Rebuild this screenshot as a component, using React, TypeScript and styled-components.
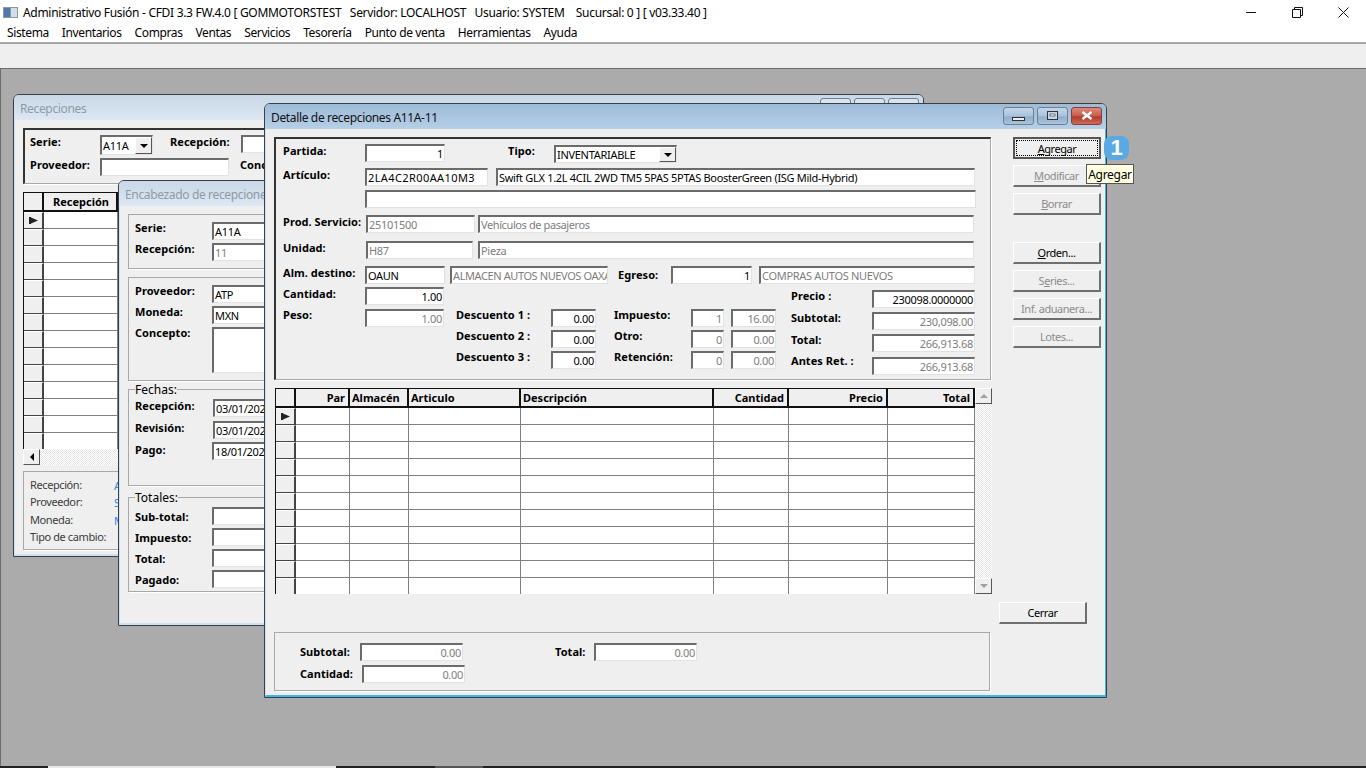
import React from "react";
import styled, { createGlobalStyle } from "styled-components";

const GlobalStyle = createGlobalStyle`
    html, body {
        margin: 0;
        padding: 0;
        height: 100%;
        overflow: hidden;
        background: #ababab;
    }
    #root {
        height: 100%;
    }
    * {
        box-sizing: border-box;
    }
`;

const UI_FONT = `"Noto Sans", "Open Sans", "Liberation Sans", sans-serif`;

const App_ = styled.div`
    display: flex;
    flex-direction: column;
    height: 768px;
    font-family: ${UI_FONT};
    font-size: 11px;
    color: #000;
`;

const TitleBar = styled.div`
    display: flex;
    align-items: center;
    height: 24px;
    background: #fff;
    padding-left: 3px;
    font-size: 12px;
    letter-spacing: -0.3px;
    white-space: pre;
`;

const TitleText = styled.span`
    margin-left: 5px;
    flex: 1;
`;

const SysButton = styled.div`
    width: 46px;
    height: 24px;
    display: flex;
    align-items: center;
    justify-content: center;
`;

const MenuBar = styled.div`
    display: flex;
    gap: 13px;
    height: 18px;
    padding: 0 0 2px 7px;
    align-items: center;
    background: #fff;
    font-size: 12px;
    letter-spacing: -0.38px;
`;

const ToolBar = styled.div`
    height: 25px;
    margin-top: 1px;
    background: #efefef;
    border-top: 1px solid #a0a0a0;
`;

const Mdi = styled.div`
    position: relative;
    flex: 1;
    background: #ababab;
    border-top: 1px solid #6c6c6c;
    border-left: 1px solid #6c6c6c;
    overflow: hidden;
`;

const TaskStrip = styled.div`
    display: flex;
    height: 2px;
    background: #222;
`;

const TaskPiece = styled.div<{ $w: number; $c: string }>`
    width: ${(p) => p.$w}px;
    background: ${(p) => p.$c};
`;

const Win = styled.section<{ $x: number; $y: number; $w: number; $h: number }>`
    position: absolute;
    left: ${(p) => p.$x}px;
    top: ${(p) => p.$y}px;
    width: ${(p) => p.$w}px;
    height: ${(p) => p.$h}px;
    display: flex;
    flex-direction: column;
    background: #efefef;
    border: 1px solid #3a3f44;
    border-radius: 6px 6px 0 0;
`;

const WinTitle = styled.header<{ $active?: boolean }>`
    display: flex;
    align-items: center;
    flex: none;
    height: 25px;
    padding: 2px 4px 0 6px;
    border-radius: 5px 5px 0 0;
    font-size: 12px;
    letter-spacing: -0.35px;
    color: ${(p) => (p.$active ? "#111" : "#8e9aa6")};
    background: ${(p) =>
        p.$active
            ? "linear-gradient(#9dbbd8, #b6cfe7)"
            : "linear-gradient(#c9d8e7, #dce7f2)"};
`;

const WinCaption = styled.span`
    flex: 1;
    white-space: nowrap;
`;

const CaptionButton = styled.div<{ $close?: boolean; $active?: boolean }>`
    width: 31px;
    height: 18px;
    margin-left: 3px;
    margin-top: -4px;
    display: flex;
    align-items: center;
    justify-content: center;
    border: 1px solid ${(p) => (p.$close ? "#8a3d35" : "#6e7f92")};
    border-radius: 3px;
    background: ${(p) =>
        p.$close
            ? "linear-gradient(#dc8a7e, #c75a4b 50%, #b23a2b 55%, #c96a5c)"
            : p.$active
              ? "linear-gradient(#c3d6e9, #a9c3dc 50%, #8fadca 55%, #a8c4de)"
              : "linear-gradient(#dbe5ef, #ccdae8)"};
`;

const WinBody = styled.div<{ $active?: boolean }>`
    flex: 1;
    min-height: 0;
    overflow: hidden;
    padding: 8px 0 0 8px;
    border-left: 1px solid #cfe2f3;
    border-right: 1px solid ${(p) => (p.$active ? "#3fb7e6" : "#cfe2f3")};
    border-bottom: 2px solid ${(p) => (p.$active ? "#3fb7e6" : "#cfe2f3")};
    position: relative;
`;

const TopArea = styled.div`
    display: flex;
    align-items: flex-start;
`;

const Panel = styled.div<{ $w: number; $h: number; $dark?: boolean; $pt?: number; $pl?: number; $mt?: number }>`
    flex: none;
    width: ${(p) => p.$w}px;
    height: ${(p) => p.$h}px;
    margin-top: ${(p) => p.$mt ?? 0}px;
    padding: ${(p) => p.$pt ?? 5}px 0 0 ${(p) => p.$pl ?? 7}px;
    border: 1px solid #a8a8a8;
    ${(p) => p.$dark && "border-top: 2px solid #333; border-left: 2px solid #333;"}
    box-shadow: 1px 1px 0 #fff;
    overflow: hidden;
`;

const Row = styled.div<{ $h: number; $ml?: number }>`
    display: flex;
    align-items: flex-start;
    height: ${(p) => p.$h}px;
    margin-left: ${(p) => p.$ml ?? 0}px;
`;

const Label = styled.span<{ $w?: number; $ml?: number; $mt?: number; $plain?: boolean }>`
    flex: none;
    width: ${(p) => (p.$w ? `${p.$w}px` : "auto")};
    margin-left: ${(p) => p.$ml ?? 0}px;
    margin-top: ${(p) => p.$mt ?? 0}px;
    line-height: 14px;
    font-weight: ${(p) => (p.$plain ? 400 : 700)};
    letter-spacing: ${(p) => (p.$plain ? "-0.4px" : "0.05px")};
    color: ${(p) => (p.$plain ? "#3c3c3c" : "#000")};
    white-space: nowrap;
`;

const Field = styled.div<{
    $w: number;
    $h?: number;
    $ml?: number;
    $mt?: number;
    $right?: boolean;
    $muted?: boolean;
    $ls?: number;
}>`
    flex: none;
    display: flex;
    align-items: center;
    justify-content: ${(p) => (p.$right ? "flex-end" : "flex-start")};
    width: ${(p) => p.$w}px;
    height: ${(p) => p.$h ?? 18}px;
    margin-left: ${(p) => p.$ml ?? 0}px;
    margin-top: ${(p) => p.$mt ?? 0}px;
    padding: 0 1px 1px;
    background: #fff;
    border: 1px solid #e2e2e2;
    border-top: 2px solid #6b6b6b;
    border-left: 2px solid #6b6b6b;
    color: ${(p) => (p.$muted ? "#7d7d7d" : "#000")};
    letter-spacing: ${(p) => p.$ls ?? -0.3}px;
    white-space: nowrap;
    overflow: hidden;
`;

const Combo = styled(Field)`
    position: relative;
`;

const DropButton = styled.div`
    position: absolute;
    right: 0;
    top: 0;
    bottom: 0;
    width: 17px;
    display: flex;
    align-items: center;
    justify-content: center;
    background: #efefef;
    border-left: 1px solid #fff;
    border-top: 1px solid #fff;
    border-right: 1px solid #555;
    border-bottom: 1px solid #555;

    &::after {
        content: "";
        border-left: 4px solid transparent;
        border-right: 4px solid transparent;
        border-top: 4px solid #000;
    }
`;

const LowerRows = styled.div`
    display: flex;
    align-items: flex-start;
`;

const Column = styled.div<{ $w: number; $pt?: number }>`
    flex: none;
    width: ${(p) => p.$w}px;
    padding-top: ${(p) => p.$pt ?? 0}px;
`;

const ButtonColumn = styled.div`
    flex: none;
    display: flex;
    flex-direction: column;
    margin-left: 22px;
`;

const WinButton = styled.div<{ $off?: boolean; $focus?: boolean; $mt?: number; $w?: number }>`
    position: relative;
    width: ${(p) => p.$w ?? 88}px;
    height: 22px;
    margin-top: ${(p) => p.$mt ?? 6}px;
    display: flex;
    align-items: center;
    justify-content: center;
    background: #efefef;
    border-top: 1px solid #fff;
    border-left: 1px solid #fff;
    border-right: 2px solid #6f6f6f;
    border-bottom: 2px solid #6f6f6f;
    letter-spacing: -0.45px;
    color: ${(p) => (p.$off ? "#8c8c8c" : "#000")};
    ${(p) =>
        p.$focus &&
        `
        border: 2px solid #555;
        &::before {
            content: "";
            position: absolute;
            inset: 1px;
            border: 1px dotted #000;
        }
    `}
`;

const GridWrap = styled.div<{ $mt?: number }>`
    display: flex;
    margin-top: ${(p) => p.$mt ?? 8}px;
`;

const Grid = styled.div<{ $w: number; $h: number; $cols: string; $ml?: number }>`
    display: grid;
    grid-template-columns: ${(p) => p.$cols};
    grid-template-rows: 19px;
    grid-auto-rows: 17px;
    width: ${(p) => p.$w}px;
    height: ${(p) => p.$h}px;
    margin-left: ${(p) => p.$ml ?? 0}px;
    overflow: hidden;
    background: #fff;
    border-top: 1px solid #111;
    border-left: 1px solid #111;
    flex: none;
`;

const HeadCell = styled.div<{ $right?: boolean; $pl?: number }>`
    display: flex;
    align-items: center;
    justify-content: ${(p) => (p.$right ? "flex-end" : "flex-start")};
    padding: 0 3px 1px ${(p) => p.$pl ?? 2}px;
    background: #efefef;
    border-right: 2px solid #111;
    border-bottom: 2px solid #111;
    font-weight: 700;
    white-space: nowrap;
`;

const IndicatorCell = styled.div`
    display: flex;
    align-items: center;
    justify-content: center;
    background: #efefef;
    border-top: 1px solid #fff;
    border-right: 2px solid #444;
    border-bottom: 1px solid #444;
`;

const DataCell = styled.div`
    background: #fff;
    border-right: 1px solid #808080;
    border-bottom: 1px solid #808080;
`;

const VScroll = styled.div`
    flex: none;
    width: 17px;
    height: 206px;
    display: flex;
    flex-direction: column;
    justify-content: space-between;
    background: repeating-conic-gradient(#fff 0 25%, #e6e6e6 0 50%) 0 0 / 2px 2px;
`;

const HScroll = styled.div`
    display: flex;
    width: 95px;
    height: 16px;
    background: repeating-conic-gradient(#fff 0 25%, #e6e6e6 0 50%) 0 0 / 2px 2px;
`;

const ScrollButton = styled.div`
    width: 17px;
    height: 16px;
    display: flex;
    align-items: center;
    justify-content: center;
    background: #efefef;
    border-top: 1px solid #fff;
    border-left: 1px solid #fff;
    border-right: 1px solid #555;
    border-bottom: 1px solid #555;
`;

const ArrowUp = styled.i<{ $c: string }>`
    border-left: 4px solid transparent;
    border-right: 4px solid transparent;
    border-bottom: 4px solid ${(p) => p.$c};
`;

const ArrowDown = styled.i<{ $c: string }>`
    border-left: 4px solid transparent;
    border-right: 4px solid transparent;
    border-top: 4px solid ${(p) => p.$c};
`;

const ArrowLeft = styled.i`
    border-top: 4px solid transparent;
    border-bottom: 4px solid transparent;
    border-right: 4px solid #000;
`;

const CloseRow = styled.div`
    display: flex;
    justify-content: flex-end;
    padding-right: 18px;
    margin-top: 8px;
`;

const BlueValue = styled.span`
    color: #2f86de;
    white-space: nowrap;
`;

const Group = styled.fieldset<{ $h: number; $mt: number }>`
    width: 480px;
    height: ${(p) => p.$h}px;
    margin: ${(p) => p.$mt}px 0 0 0;
    padding: 4px 0 0 6px;
    border: 1px solid #a8a8a8;
    box-shadow: 1px 1px 0 #fff;
`;

const GroupTitle = styled.legend`
    padding: 0;
    font-size: 12px;
    line-height: 12px;
`;

const GroupText = styled.span`
    position: relative;
    top: 1px;
`;

const Badge = styled.div`
    position: absolute;
    left: 1103px;
    top: 67px;
    width: 25px;
    height: 24px;
    display: flex;
    align-items: center;
    justify-content: center;
    border-radius: 8px;
    background: #5ba9e2;
    color: #fff;
    font-size: 22px;
    font-weight: 700;
    font-family: "Liberation Sans", sans-serif;
`;

const Tooltip = styled.div`
    position: absolute;
    left: 1085px;
    top: 95px;
    width: 48px;
    height: 20px;
    display: flex;
    align-items: center;
    justify-content: center;
    background: #ffffe1;
    border: 1px solid #555;
    font-size: 12px;
    letter-spacing: -0.3px;
    white-space: nowrap;
`;

function RowMarker() {
    return (
        <svg width="9" height="7" viewBox="0 0 9 7">
            <rect x="0" y="0" width="2" height="7" fill="#222" />
            <path d="M2 0.5 L9 3.5 L2 6.5 Z" fill="#222" />
        </svg>
    );
}

function AppIcon() {
    return (
        <svg width="15" height="13" viewBox="0 0 15 13">
            <rect x="0" y="1" width="15" height="11" fill="#8a97a5" />
            <rect x="1" y="2" width="6" height="9" fill="#4f78a8" />
            <rect x="8" y="2" width="6" height="9" fill="#d5dee7" />
        </svg>
    );
}

function GridBody({ columns, rows }: { columns: number; rows: number }) {
    const cells = [];
    for (let r = 0; r < rows; r++) {
        cells.push(
            <IndicatorCell key={`i${r}`}>{r === 0 ? <RowMarker /> : null}</IndicatorCell>,
        );
        for (let c = 0; c < columns; c++) {
            cells.push(<DataCell key={`${r}-${c}`} />);
        }
    }
    return <>{cells}</>;
}

function RecepcionesWindow() {
    return (
        <Win $x={12} $y={25} $w={911} $h={463}>
            <WinTitle>
                <WinCaption>Recepciones</WinCaption>
                <CaptionButton />
                <CaptionButton />
                <CaptionButton />
            </WinTitle>
            <WinBody>
                <Panel $w={880} $h={56} $dark $pt={5} $pl={5}>
                    <Row $h={23}>
                        <Label $w={70}>Serie:</Label>
                        <Combo $w={53} $h={20}>
                            A11A
                            <DropButton />
                        </Combo>
                        <Label $w={71} $ml={17}>
                            Recepción:
                        </Label>
                        <Field $w={90} />
                    </Row>
                    <Row $h={20}>
                        <Label $w={70}>Proveedor:</Label>
                        <Field $w={129} />
                        <Label $ml={11}>Concepto:</Label>
                    </Row>
                </Panel>
                <GridWrap>
                    <Grid $w={300} $h={257} $cols="20px 74px 1fr">
                        <HeadCell />
                        <HeadCell $pl={9}>Recepción</HeadCell>
                        <HeadCell />
                        <GridBody columns={2} rows={14} />
                    </Grid>
                </GridWrap>
                <HScroll>
                    <ScrollButton>
                        <ArrowLeft />
                    </ScrollButton>
                </HScroll>
                <Panel $w={880} $h={79} $mt={6} $pt={6} $pl={6}>
                    <Row $h={17}>
                        <Label $plain $w={84}>
                            Recepción:
                        </Label>
                        <BlueValue>A11A</BlueValue>
                    </Row>
                    <Row $h={18}>
                        <Label $plain $w={84}>
                            Proveedor:
                        </Label>
                        <BlueValue>SUZUKI</BlueValue>
                    </Row>
                    <Row $h={17}>
                        <Label $plain $w={84}>
                            Moneda:
                        </Label>
                        <BlueValue>MXN</BlueValue>
                    </Row>
                    <Row $h={17}>
                        <Label $plain $w={84}>
                            Tipo de cambio:
                        </Label>
                    </Row>
                </Panel>
            </WinBody>
        </Win>
    );
}

function EncabezadoWindow() {
    return (
        <Win $x={117} $y={111} $w={600} $h={446}>
            <WinTitle>
                <WinCaption>Encabezado de recepciones</WinCaption>
            </WinTitle>
            <WinBody>
                <Panel $w={480} $h={55} $pl={6} $pt={7}>
                    <Row $h={21}>
                        <Label $w={77} $mt={-1}>
                            Serie:
                        </Label>
                        <Field $w={100}>A11A</Field>
                    </Row>
                    <Row $h={18}>
                        <Label $w={77} $mt={-1}>
                            Recepción:
                        </Label>
                        <Field $w={100} $muted>
                            11
                        </Field>
                    </Row>
                </Panel>
                <Panel $w={480} $h={104} $mt={8} $pl={6} $pt={7}>
                    <Row $h={21}>
                        <Label $w={77} $mt={-1}>
                            Proveedor:
                        </Label>
                        <Field $w={100}>ATP</Field>
                    </Row>
                    <Row $h={21}>
                        <Label $w={77} $mt={-1}>
                            Moneda:
                        </Label>
                        <Field $w={100}>MXN</Field>
                    </Row>
                    <Row $h={46}>
                        <Label $w={77} $mt={-1}>
                            Concepto:
                        </Label>
                        <Field $w={100} $h={46} />
                    </Row>
                </Panel>
                <Group $h={103} $mt={2}>
                    <GroupTitle>
                        <GroupText>Fechas:</GroupText>
                    </GroupTitle>
                    <Row $h={22}>
                        <Label $w={78}>Recepción:</Label>
                        <Field $w={100}>03/01/2022</Field>
                    </Row>
                    <Row $h={21}>
                        <Label $w={78}>Revisión:</Label>
                        <Field $w={100}>03/01/2022</Field>
                    </Row>
                    <Row $h={22}>
                        <Label $w={77} $mt={1}>
                            Pago:
                        </Label>
                        <Field $w={100}>18/01/2022</Field>
                    </Row>
                </Group>
                <Group $h={101} $mt={5}>
                    <GroupTitle>
                        <GroupText>Totales:</GroupText>
                    </GroupTitle>
                    <Row $h={21}>
                        <Label $w={77} $mt={3}>
                            Sub-total:
                        </Label>
                        <Field $w={100} />
                    </Row>
                    <Row $h={21}>
                        <Label $w={77} $mt={3}>
                            Impuesto:
                        </Label>
                        <Field $w={100} />
                    </Row>
                    <Row $h={21}>
                        <Label $w={77} $mt={3}>
                            Total:
                        </Label>
                        <Field $w={100} />
                    </Row>
                    <Row $h={21}>
                        <Label $w={77} $mt={3}>
                            Pagado:
                        </Label>
                        <Field $w={100} />
                    </Row>
                </Group>
            </WinBody>
        </Win>
    );
}

function DetalleWindow() {
    const cols = "20px 54px 59px 112px 193px 75px 99px 87px";
    return (
        <Win $x={263} $y={34} $w={843} $h={595}>
            <WinTitle $active>
                <WinCaption>Detalle de recepciones A11A-11</WinCaption>
                <CaptionButton $active>
                    <svg width="13" height="12" viewBox="0 0 13 12">
                        <rect x="0.5" y="7.5" width="12" height="3" fill="#e8eef5" stroke="#333" />
                    </svg>
                </CaptionButton>
                <CaptionButton $active>
                    <svg width="11" height="9" viewBox="0 0 11 9">
                        <rect x="0.5" y="0.5" width="10" height="8" fill="#c6d6e6" stroke="#333" />
                        <rect x="3" y="3" width="5" height="2" fill="#eef3f8" stroke="#333" strokeWidth="0.6" />
                    </svg>
                </CaptionButton>
                <CaptionButton $close>
                    <svg width="12" height="9" viewBox="0 0 12 9">
                        <path d="M1.5 1 L10.5 8 M10.5 1 L1.5 8" stroke="#fff" strokeWidth="2.4" />
                    </svg>
                </CaptionButton>
            </WinTitle>
            <WinBody $active>
                <TopArea>
                    <Panel $w={717} $h={243} $dark>
                        <Row $h={24}>
                            <Label $w={82}>Partida:</Label>
                            <Field $w={80} $right>
                                1
                            </Field>
                            <Label $w={46} $ml={63}>
                                Tipo:
                            </Label>
                            <Combo $w={123} $mt={1}>
                                INVENTARIABLE
                                <DropButton />
                            </Combo>
                        </Row>
                        <Row $h={22}>
                            <Label $w={82}>Artículo:</Label>
                            <Field $w={123} $ls={0.4}>
                                2LA4C2R00AA10M3
                            </Field>
                            <Field $w={479} $ml={8}>
                                Swift GLX 1.2L 4CIL 2WD TM5 5PAS 5PTAS BoosterGreen (ISG Mild-Hybrid)
                            </Field>
                        </Row>
                        <Row $h={25}>
                            <Label $w={82} />
                            <Field $w={611} />
                        </Row>
                        <Row $h={26}>
                            <Label $w={83}>Prod. Servicio:</Label>
                            <Field $w={109} $muted>
                                25101500
                            </Field>
                            <Field $w={496} $ml={3} $muted $ls={-0.4}>
                                Vehículos de pasajeros
                            </Field>
                        </Row>
                        <Row $h={25}>
                            <Label $w={83}>Unidad:</Label>
                            <Field $w={107} $muted>
                                H87
                            </Field>
                            <Field $w={496} $ml={5} $muted>
                                Pieza
                            </Field>
                        </Row>
                        <Row $h={21}>
                            <Label $w={82}>Alm. destino:</Label>
                            <Field $w={80}>OAUN</Field>
                            <Field $w={158} $ml={5} $muted $ls={-0.4}>
                                ALMACEN AUTOS NUEVOS OAXACA
                            </Field>
                            <Label $w={53} $ml={10} $mt={2}>
                                Egreso:
                            </Label>
                            <Field $w={81} $right>
                                1
                            </Field>
                            <Field $w={216} $ml={7} $muted>
                                COMPRAS AUTOS NUEVOS
                            </Field>
                        </Row>
                        <LowerRows>
                            <Column $w={173}>
                                <Row $h={22}>
                                    <Label $w={82}>Cantidad:</Label>
                                    <Field $w={79} $right>
                                        1.00
                                    </Field>
                                </Row>
                                <Row $h={22}>
                                    <Label $w={82} $mt={-1}>
                                        Peso:
                                    </Label>
                                    <Field $w={79} $right $muted>
                                        1.00
                                    </Field>
                                </Row>
                            </Column>
                            <Column $w={158} $pt={22}>
                                <Row $h={21}>
                                    <Label $w={95} $mt={-1}>
                                        Descuento 1 :
                                    </Label>
                                    <Field $w={45} $right>
                                        0.00
                                    </Field>
                                </Row>
                                <Row $h={21}>
                                    <Label $w={95} $mt={-1}>
                                        Descuento 2 :
                                    </Label>
                                    <Field $w={45} $right>
                                        0.00
                                    </Field>
                                </Row>
                                <Row $h={21}>
                                    <Label $w={95} $mt={-1}>
                                        Descuento 3 :
                                    </Label>
                                    <Field $w={45} $right>
                                        0.00
                                    </Field>
                                </Row>
                            </Column>
                            <Column $w={177} $pt={22}>
                                <Row $h={21}>
                                    <Label $w={77} $mt={-1}>
                                        Impuesto:
                                    </Label>
                                    <Field $w={33} $right $muted>
                                        1
                                    </Field>
                                    <Field $w={45} $ml={7} $right $muted>
                                        16.00
                                    </Field>
                                </Row>
                                <Row $h={21}>
                                    <Label $w={77} $mt={-1}>
                                        Otro:
                                    </Label>
                                    <Field $w={33} $right $muted>
                                        0
                                    </Field>
                                    <Field $w={45} $ml={7} $right $muted>
                                        0.00
                                    </Field>
                                </Row>
                                <Row $h={21}>
                                    <Label $w={77} $mt={-1}>
                                        Retención:
                                    </Label>
                                    <Field $w={33} $right $muted>
                                        0
                                    </Field>
                                    <Field $w={45} $ml={7} $right $muted>
                                        0.00
                                    </Field>
                                </Row>
                            </Column>
                            <Column $w={190} $pt={3}>
                                <Row $h={22}>
                                    <Label $w={81} $mt={-1}>
                                        Precio :
                                    </Label>
                                    <Field $w={103} $right>
                                        230098.0000000
                                    </Field>
                                </Row>
                                <Row $h={22}>
                                    <Label $w={81} $mt={-1}>
                                        Subtotal:
                                    </Label>
                                    <Field $w={103} $right $muted>
                                        230,098.00
                                    </Field>
                                </Row>
                                <Row $h={23}>
                                    <Label $w={81} $mt={-1}>
                                        Total:
                                    </Label>
                                    <Field $w={103} $right $muted>
                                        266,913.68
                                    </Field>
                                </Row>
                                <Row $h={22}>
                                    <Label $w={81} $mt={-3}>
                                        Antes Ret. :
                                    </Label>
                                    <Field $w={103} $right $muted>
                                        266,913.68
                                    </Field>
                                </Row>
                            </Column>
                        </LowerRows>
                    </Panel>
                    <ButtonColumn>
                        <WinButton $focus $mt={0}>
                            <span>
                                <u>A</u>gregar
                            </span>
                        </WinButton>
                        <WinButton $off>
                            <span>
                                <u>M</u>odificar
                            </span>
                        </WinButton>
                        <WinButton $off>
                            <span>
                                <u>B</u>orrar
                            </span>
                        </WinButton>
                        <WinButton $mt={27}>
                            <span>
                                <u>O</u>rden...
                            </span>
                        </WinButton>
                        <WinButton $off>
                            <span>
                                S<u>e</u>ries...
                            </span>
                        </WinButton>
                        <WinButton $off>Inf. aduanera...</WinButton>
                        <WinButton $off>Lotes...</WinButton>
                    </ButtonColumn>
                </TopArea>
                <GridWrap>
                    <Grid $w={700} $h={206} $cols={cols} $ml={1}>
                        <HeadCell />
                        <HeadCell $right>Par</HeadCell>
                        <HeadCell>Almacén</HeadCell>
                        <HeadCell>Articulo</HeadCell>
                        <HeadCell>Descripción</HeadCell>
                        <HeadCell $right>Cantidad</HeadCell>
                        <HeadCell $right>Precio</HeadCell>
                        <HeadCell $right>Total</HeadCell>
                        <GridBody columns={7} rows={11} />
                    </Grid>
                    <VScroll>
                        <ScrollButton>
                            <ArrowUp $c="#a0a0a0" />
                        </ScrollButton>
                        <ScrollButton>
                            <ArrowDown $c="#a0a0a0" />
                        </ScrollButton>
                    </VScroll>
                </GridWrap>
                <CloseRow>
                    <WinButton $mt={0}>Cerrar</WinButton>
                </CloseRow>
                <Panel $w={716} $h={59} $mt={8} $pt={10} $pl={25}>
                    <Row $h={22}>
                        <Label $w={60} $mt={2}>
                            Subtotal:
                        </Label>
                        <Field $w={103} $right $muted>
                            0.00
                        </Field>
                        <Label $w={39} $ml={92} $mt={2}>
                            Total:
                        </Label>
                        <Field $w={103} $right $muted>
                            0.00
                        </Field>
                    </Row>
                    <Row $h={18}>
                        <Label $w={62} $mt={2}>
                            Cantidad:
                        </Label>
                        <Field $w={103} $right $muted>
                            0.00
                        </Field>
                    </Row>
                </Panel>
            </WinBody>
        </Win>
    );
}

export default function App() {
    return (
        <App_>
            <GlobalStyle />
            <TitleBar>
                <AppIcon />
                <TitleText>
                    {"Administrativo Fusión - CFDI 3.3 FW.4.0 [ GOMMOTORSTEST   Servidor: LOCALHOST   Usuario: SYSTEM    Sucursal: 0 ] [ v03.33.40 ]"}
                </TitleText>
                <SysButton>
                    <svg width="11" height="10" viewBox="0 0 11 10">
                        <path d="M0 5.5 H10" stroke="#111" />
                    </svg>
                </SysButton>
                <SysButton>
                    <svg width="11" height="11" viewBox="0 0 11 11">
                        <path d="M0.5 2.5 H8.5 V10.5 H0.5 Z M2.5 2.5 V0.5 H10.5 V8.5 H8.5" fill="none" stroke="#111" />
                    </svg>
                </SysButton>
                <SysButton>
                    <svg width="11" height="11" viewBox="0 0 11 11">
                        <path d="M0.5 0.5 L10.5 10.5 M10.5 0.5 L0.5 10.5" stroke="#111" />
                    </svg>
                </SysButton>
            </TitleBar>
            <MenuBar>
                <span>Sistema</span>
                <span>Inventarios</span>
                <span>Compras</span>
                <span>Ventas</span>
                <span>Servicios</span>
                <span>Tesorería</span>
                <span>Punto de venta</span>
                <span>Herramientas</span>
                <span>Ayuda</span>
            </MenuBar>
            <ToolBar />
            <Mdi>
                <RecepcionesWindow />
                <EncabezadoWindow />
                <DetalleWindow />
                <Badge>1</Badge>
                <Tooltip>Agregar</Tooltip>
            </Mdi>
            <TaskStrip>
                <TaskPiece $w={48} $c="#222" />
                <TaskPiece $w={288} $c="#e8e8e8" />
                <TaskPiece $w={99} $c="#222" />
                <TaskPiece $w={48} $c="#555" />
            </TaskStrip>
        </App_>
    );
}
